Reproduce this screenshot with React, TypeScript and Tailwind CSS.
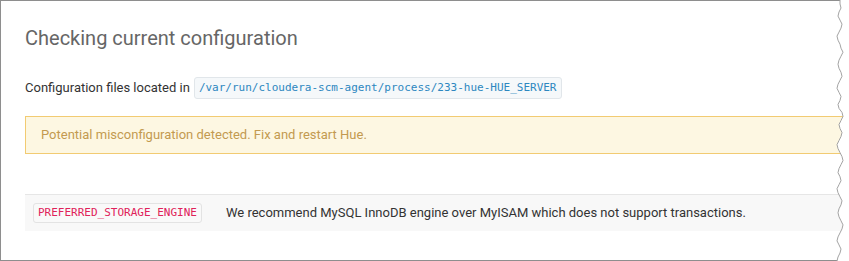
import React from 'react';

// jagged "torn paper" edge on the right of the frame
const TEAR: number[] = [
  21, 21, 22, 20, 19, 21, 23, 22, 20, 18, 19, 21, 22, 24, 22, 20, 19, 20, 22, 23,
  21, 19, 18, 20, 22, 21, 19, 20, 23, 24, 22, 20, 21, 23, 22, 20, 18, 19, 21, 23,
  24, 22, 20, 19, 21, 22, 20, 18, 19, 21, 23, 22, 20, 19, 20, 22, 24, 23, 21, 19,
  18, 20, 22, 21, 19, 18,
];

const TornEdge: React.FC = () => {
  const step = 261 / (TEAR.length - 1);
  const pts = TEAR.map((x, i) => `${x},${(i * step).toFixed(1)}`);
  const line = pts.join(' ');
  const fill = `${line} 30,261 30,0`;
  return (
    <svg className="absolute top-0 right-0" width="30" height="261" viewBox="0 0 30 261">
      <polygon points={fill} fill="#ffffff" />
      <polyline points={line} fill="none" stroke="#a3a3a3" strokeWidth="1" />
    </svg>
  );
};

export default function App() {
  return (
    <div className="relative w-[849px] h-[261px] bg-white overflow-hidden font-['Roboto',sans-serif]">
      <div className="w-[860px] h-[261px] border-l border-t border-b border-[#8e8e8e] pl-[24px] pt-[22px]">
        <h1 className="text-[20px] leading-[30px] text-[#666666] font-normal">
          Checking current configuration
        </h1>

        <div className="mt-[24px] flex items-center text-[13px] text-[#333333] h-[22px]">
          <span>Configuration files located in</span>
          <code className="ml-[4px] h-[22px] px-[4px] flex items-center rounded-[3px] border border-[#e1e6ea] bg-[#f5f8fa] text-[11px] text-[#2d87c0] font-['DejaVu_Sans_Mono',monospace]">
            /var/run/cloudera-scm-agent/process/233-hue-HUE_SERVER
          </code>
        </div>

        <div className="mt-[17px] h-[38px] border border-[#f2cb72] bg-[#fdf7e2] pl-[15px] flex items-center text-[13px] text-[#c39a50]">
          Potential misconfiguration detected. Fix and restart Hue.
        </div>

        <div className="mt-[40px] h-[37px] border-t border-[#e6e6e6] bg-[#f8f8f8] pl-[8px] flex items-center text-[13px] text-[#333333]">
          <code className="h-[20px] px-[4px] flex items-center rounded-[3px] border border-[#e3e3e3] bg-[#f9f9f9] text-[11px] text-[#e0225a] font-['DejaVu_Sans_Mono',monospace]">
            PREFERRED_STORAGE_ENGINE
          </code>
          <span className="ml-[24px]">
            We recommend MySQL InnoDB engine over MyISAM which does not support transactions.
          </span>
        </div>
      </div>
      <TornEdge />
    </div>
  );
}
